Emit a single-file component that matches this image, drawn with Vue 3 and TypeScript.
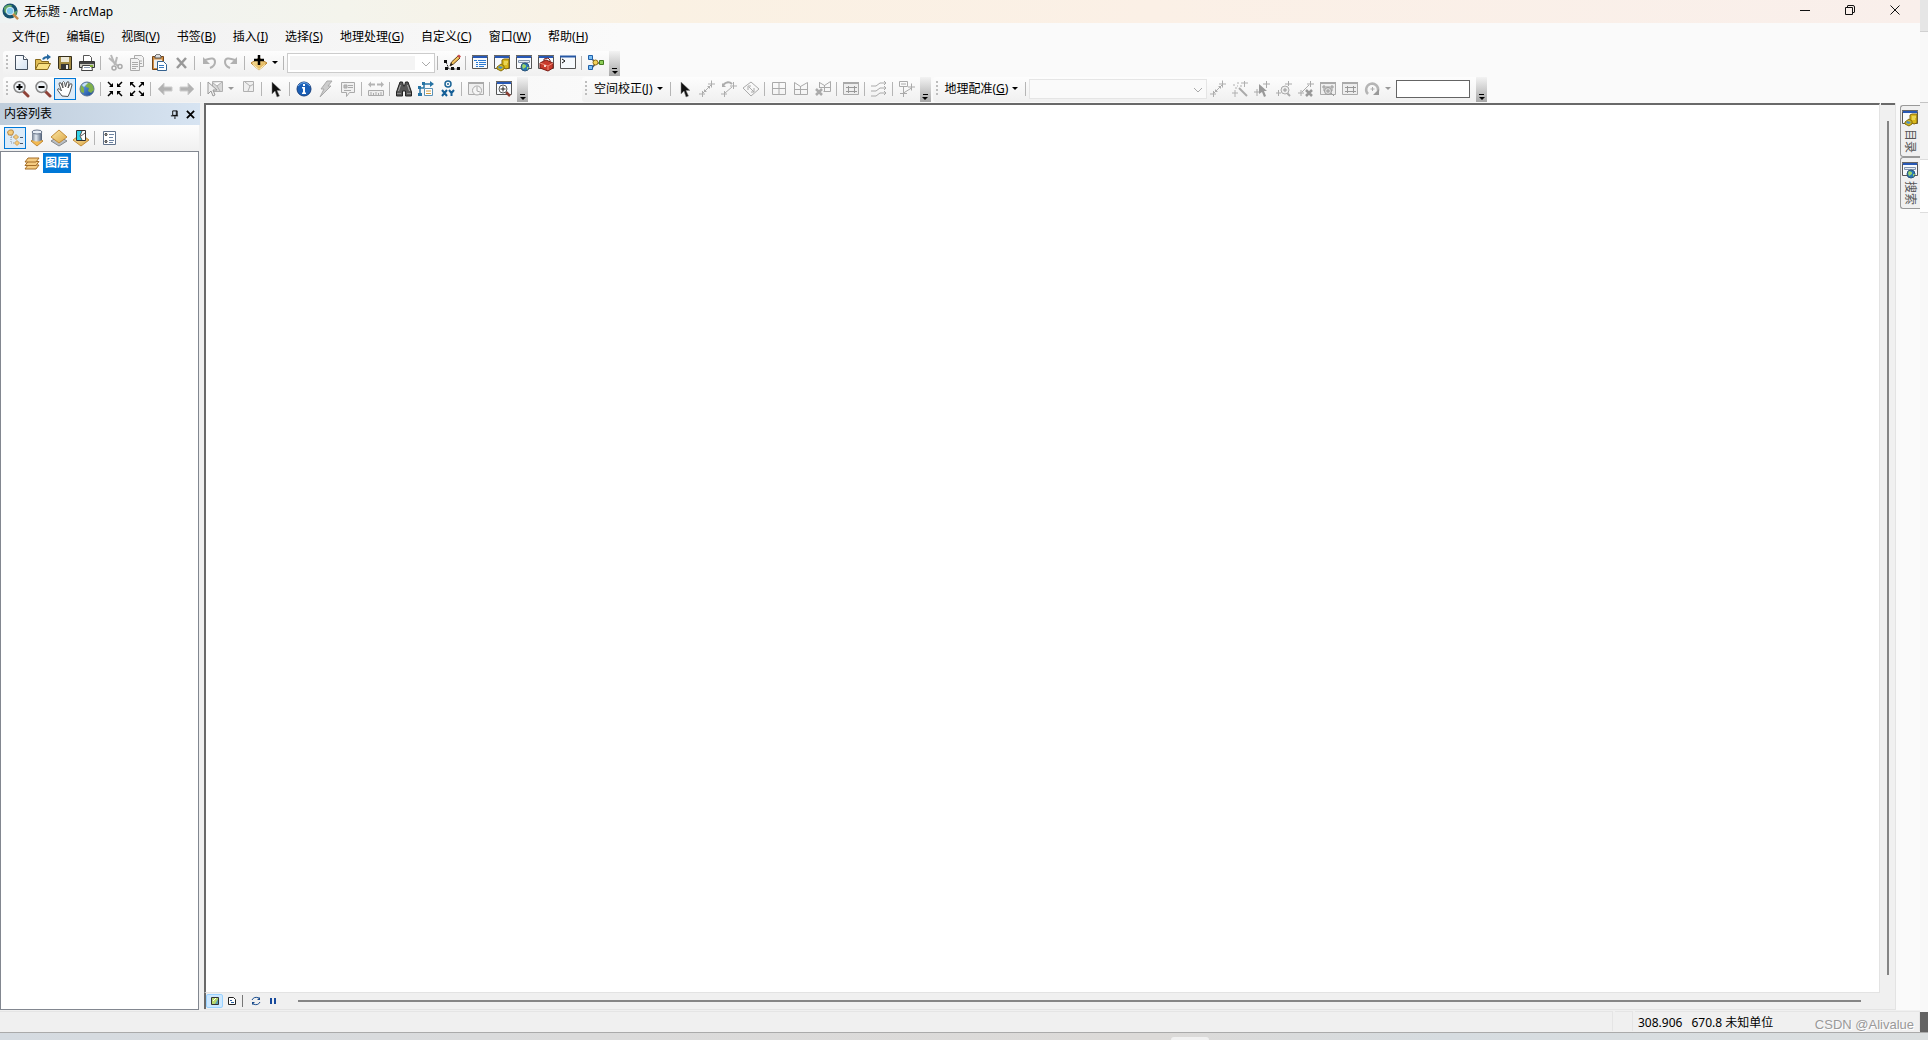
<script setup lang="ts">
import { ref } from 'vue'

interface Tool {
  kind: 'icon' | 'sep' | 'drop' | 'menu'
  icon?: string
  label?: string
  key?: string
  active?: boolean
  off?: boolean
}

const sep: Tool = { kind: 'sep' }
const drop = (label: string, off = false): Tool => ({ kind: 'drop', label, off })
const on = (icon: string, label: string, active = false): Tool => ({ kind: 'icon', icon, label, active })
const off = (icon: string, label: string): Tool => ({ kind: 'icon', icon, label, off: true })

const menus = [
  ['文件', 'F'], ['编辑', 'E'], ['视图', 'V'], ['书签', 'B'], ['插入', 'I'],
  ['选择', 'S'], ['地理处理', 'G'], ['自定义', 'C'], ['窗口', 'W'], ['帮助', 'H'],
]

const standardLeft: Tool[] = [
  on('new', '新建'), on('open', '打开'), on('save', '保存'), on('print', '打印'), sep,
  off('cut', '剪切'), off('copy', '复制'), on('paste', '粘贴'), off('delete', '删除'), sep,
  off('undo', '撤消'), off('redo', '恢复'), sep,
  on('add', '添加数据'), drop('添加数据选项'), sep,
]
const standardRight: Tool[] = [
  sep, on('editor', '编辑器'), sep,
  on('table', '内容列表'), on('catalog', '目录'), on('search', '搜索'), on('toolbox', 'ArcToolbox'), on('python', 'Python'), sep,
  on('model', '模型构建器'),
]
const navTools: Tool[] = [
  on('zoomin', '放大'), on('zoomout', '缩小'), on('hand', '平移', true), on('globe', '全图'), sep,
  on('shrink', '固定比例放大'), on('expand', '固定比例缩小'), sep,
  off('back', '后退'), off('forward', '前进'), sep,
  off('select', '选择要素'), drop('选择方式', true), off('clear', '清除选择'), sep,
  on('cursor', '选择元素'), sep,
  on('info', '识别'), off('flash', '超链接'), off('popup', 'HTML 弹出窗口'), sep,
  off('measure', '测量'), sep,
  on('find', '查找'), on('route', '查找路径'), on('xy', '转到 XY'), sep,
  off('time', '时间滑块'), sep,
  on('viewer', '查看器窗口'),
]
const adjustTools: Tool[] = [
  { kind: 'menu', label: '空间校正', key: 'J' }, sep,
  on('cursor', '选择元素'), off('link', '新建位移链接'), off('curvelink', '修改链接'), off('diamond', '多位移链接'), sep,
  off('grid', '新建标识链接'), off('edge', '边匹配'), off('edgex', '删除标识链接'), sep,
  off('linktable', '查看链接表'), sep,
  off('multi', '边捕捉'), sep,
  off('attr', '属性传递'),
]
const georefTools: Tool[] = [
  off('link', '添加控制点'), off('wand', '自动配准'), off('linksel', '选择链接'), off('linkzoom', '缩放至链接'),
  off('linkdel', '删除链接'), off('viewlink', '查看器'), off('linktable', '链接表'), off('rotate', '旋转'), drop('旋转选项', true),
]
const tocTools = [
  on('bydraw', '按绘制顺序列出', true), on('bysource', '按源列出'), on('byvis', '按可见性列出'), on('bysel', '按选择列出'), sep,
  on('options', '选项'),
]

const scale = ref('')
const layer = ref('')
const angle = ref('')
</script>

<template>
  <svg class="sprites" aria-hidden="true">
    <defs>
      <linearGradient id="gBlue" x1="0" y1="0" x2="1" y2="1"><stop offset="0" stop-color="#7db4ee" /><stop offset="1" stop-color="#0b3f94" /></linearGradient>
      <linearGradient id="gGold" x1="0" y1="0" x2="1" y2="1"><stop offset="0" stop-color="#fbe7a4" /><stop offset="1" stop-color="#dba646" /></linearGradient>
      <linearGradient id="gPage" x1="0" y1="0" x2="1" y2="1"><stop offset="0" stop-color="#fff" /><stop offset="1" stop-color="#d3e2f2" /></linearGradient>
      <linearGradient id="gCyl"><stop offset="0" stop-color="#6f7b8d" /><stop offset=".4" stop-color="#e4ebf3" /><stop offset="1" stop-color="#4c5c74" /></linearGradient>
    </defs>
    <symbol id="new" viewBox="0 0 18 18"><path d="M3.500 1.500h8l4 4v10h-12z" fill="url(#gPage)" stroke="#44505f" /><path d="M11.500 1.500v4h4" fill="#fff" stroke="#44505f" /></symbol>
    <symbol id="open" viewBox="0 0 18 18"><path d="M1.500 15.500V5.500h5l1 2h7v3" fill="#e0bd55" stroke="#86691c" /><path d="M1.500 15.500l3-6h12l-3 6z" fill="#f8df83" stroke="#86691c" /><path d="M9 5.500q1-2.500 5-2.500" fill="none" stroke="#24679f" stroke-width="2" /><path d="M13 0l4 3-4 3z" fill="#24679f" /></symbol>
    <symbol id="save" viewBox="0 0 18 18"><path d="M2.500 2.500h13v13h-12l-1-1z" fill="#a48b43" stroke="#342e1c" /><path d="M5 3h8v5H5z" fill="#ede9d8" /><path d="M5 10h8v5H5z" fill="#353535" /><path d="M10 11h2v4h-2z" fill="#eee" /></symbol>
    <symbol id="print" viewBox="0 0 18 18"><path d="M5.500 7V1.500h6l2 2V7" fill="#fff" stroke="#555" /><path d="M1.500 7.500h15v6h-15z" fill="#c8c8bf" stroke="#353535" /><path d="M2 9h14" stroke="#444" stroke-width="2" /><path d="M4.500 11.500h9l1 5h-11z" fill="#fff" stroke="#444" /><path d="M12 12h3" stroke="#7fae34" stroke-width="2" /><path d="M6 13.500h6" stroke="#8a9ab3" /></symbol>
    <symbol id="cut" viewBox="0 0 18 18"><path d="M5 1l4 10M11 3l-2 8M3 4l9 8" fill="none" stroke="#b8b8b8" stroke-width="2" /><circle cx="8" cy="14" r="2" fill="none" stroke="#aaa" stroke-width="1.500" /><circle cx="14" cy="12.500" r="2" fill="none" stroke="#aaa" stroke-width="1.500" /></symbol>
    <symbol id="copy" viewBox="0 0 18 18"><g fill="#f2f2f2" stroke="#aaa"><path d="M6.500 1.500h7l2 2v9h-9z" /><path d="M2.500 4.500h7l2 2v10h-9z" /></g><path d="M4 8.500h6M4 10.500h6M4 12.500h6M4 14.500h4M12 7h2M12 9.500h2" stroke="#aaa" /></symbol>
    <symbol id="paste" viewBox="0 0 18 18"><path d="M2.500 2.500h11v13h-11z" fill="#d28e41" stroke="#73451b" /><path d="M5 2q3-4 6 0v2H5z" fill="#ddd" stroke="#555" /><path d="M4 5.500h8V14H4z" fill="#eee" /><path d="M7.500 7.500h6l3 3v6h-9z" fill="#fff" stroke="#35628f" /><path d="M9 11.500h5M9 13.500h5" stroke="#397ac0" /></symbol>
    <symbol id="delete" viewBox="0 0 18 18"><path d="M5 4l9 10M14 4L5 14" stroke="#999" stroke-width="2.500" /></symbol>
    <symbol id="undo" viewBox="0 0 18 18"><path d="M5 6q10-4 10 2 0 4-5 6" fill="none" stroke="#b1b1b1" stroke-width="2" /><path d="M3 3v7h7z" fill="#b1b1b1" /></symbol>
    <symbol id="redo" viewBox="0 0 18 18"><path d="M13 6Q3 2 3 8q0 4 5 6" fill="none" stroke="#b1b1b1" stroke-width="2" /><path d="M15 3v7H8z" fill="#b1b1b1" /></symbol>
    <symbol id="add" viewBox="0 0 18 18"><path d="M1 9l8-5 8 5-8 7z" fill="url(#gGold)" stroke="#b98330" /><path d="M3 10.500l6 5 6-5" fill="none" stroke="#fff3bd" /><path d="M9 1v10M4 6h10" stroke="#000" stroke-width="2.500" /></symbol>
    <symbol id="editor" viewBox="0 0 18 18"><path d="M3 8l3 7h10" fill="none" stroke="#222" stroke-dasharray="2 1" /><path d="M1 6h3v3H1zM2 13h3v3H2zM8 13h3v3H8zM14 13h3v3h-3z" fill="#111" /><path d="M7 12l1.500-4L15 2l2 2-6.500 6z" fill="#f2c35e" stroke="#634318" /><path d="M14 2l2-1.500L18 2.500 16.500 4z" fill="#c94b49" /><path d="M7 12l1-3 2 1.500z" fill="#222" /></symbol>
    <symbol id="win" viewBox="0 0 18 18"><path d="M1.500 2.500h15v12h-15z" fill="#f7fafd" stroke="#555" /><path d="M1 1.500h16" stroke="#666" /><path d="M2 2h14v2H2z" fill="#2758b5" /></symbol>
    <symbol id="table" viewBox="0 0 18 18"><use href="#win" width="18" height="18" /><path d="M3 6.500h3M7 6.500h8M5 8.500h2M8 8.500h7M5 10.500h2M8 10.500h7M5 12.500h2M8 12.500h5" stroke="#2c7ad0" /></symbol>
    <symbol id="catalog" viewBox="0 0 18 18"><use href="#win" width="18" height="18" /><path d="M9 6l2-1h5v9l-3 1-4-2z" fill="#d9b81b" stroke="#85670b" /><path d="M11 8h4M11 10h3" stroke="#fbf18e" /><path d="M4 13l4-3 3 2v3l-3 2-4-2z" fill="#d6b619" stroke="#87700b" /><path d="M6 12l4 1-2 2-3-1z" fill="#4a8fc6" /></symbol>
    <symbol id="search" viewBox="0 0 18 18"><use href="#win" width="18" height="18" /><path d="M3.500 6.500h11v2h-11z" fill="#e7edf5" stroke="#8294ad" /><circle cx="10" cy="13" r="4" fill="#2879b8" stroke="#2b5479" /><path d="M8 10q4 1 3 3l-3 2-1-3zM12 13h2l-2 3z" fill="#9bd568" /></symbol>
    <symbol id="toolbox" viewBox="0 0 18 18"><use href="#win" width="18" height="18" /><path d="M3 9l6-3 7 3v5l-5 3-8-3z" fill="#c83a2d" stroke="#7c1e17" /><path d="M3 9l8 3 5-3M11 12v4" fill="none" stroke="#ef8a77" /><path d="M7 7V5l4-1 2 2v2" fill="none" stroke="#7c1e17" /><path d="M7 11h2v2H7z" fill="#f4d4cb" /></symbol>
    <symbol id="python" viewBox="0 0 18 18"><path d="M1.500 2.500h15v12h-15z" fill="#f7fafd" stroke="#555" /><path d="M1 1.500h16v2H1z" fill="#2758a5" /><path d="M3 5l3 2-3 2" fill="none" stroke="#111" /></symbol>
    <symbol id="model" viewBox="0 0 18 18"><path d="M4 4l5 5-5 6M8 9h6" fill="none" stroke="#555" stroke-width="1.500" /><path d="M1.500 1.500h4v4h-4zM1.500 11.500h4v4h-4z" fill="#7dc1f5" stroke="#1f5fa8" /><circle cx="8.500" cy="8.500" r="2.500" fill="#f4d156" stroke="#8a6c18" /><path d="M12.500 6.500h4v4h-4z" fill="#8ccd57" stroke="#437a1f" /></symbol>
    <symbol id="lens" viewBox="0 0 18 18"><path d="M11 11l5 5" stroke="#8f4238" stroke-width="3" stroke-linecap="round" /><circle cx="7.500" cy="7" r="5.500" fill="#eef2f6" stroke="#888" stroke-width="1.500" /></symbol>
    <symbol id="zoomin" viewBox="0 0 18 18"><use href="#lens" width="18" height="18" /><path d="M7.500 4v6M4.500 7h6" stroke="#000" stroke-width="2" /></symbol>
    <symbol id="zoomout" viewBox="0 0 18 18"><use href="#lens" width="18" height="18" /><path d="M4.500 7h6" stroke="#000" stroke-width="2" /></symbol>
    <symbol id="hand" viewBox="0 0 18 18"><path d="M6 16L1.500 10q0-2 2-1l2 2L3 4q0-2 2-1l2 5-.5-5.500q1-2 2 0L9.500 7l1.500-5q2-1 2 1l-1 5 2-4q2-1 2 1l-2 7-2 4.500z" fill="#fff" stroke="#555" /></symbol>
    <symbol id="globe" viewBox="0 0 18 18"><circle cx="9" cy="9" r="7" fill="url(#gBlue)" stroke="#5b7394" /><path d="M8 3q5-1 7 3l1 4-3 3-3-2 1-3-3-1-1-2zM3 5l3 3v5l-3-1q-1-3 0-7z" fill="#7fb04b" /><path d="M4 5q3-3 6-2L6 7z" fill="#c6e0f2" /></symbol>
    <symbol id="shrink" viewBox="0 0 18 18"><path d="M2 2l4 4M16 2l-4 4M2 16l4-4M16 16l-4-4" stroke="#000" stroke-width="1.500" /><path d="M7 3v4H3zM11 3v4h4zM7 15v-4H3zM11 15v-4h4z" /></symbol>
    <symbol id="expand" viewBox="0 0 18 18"><path d="M3 3l4 4M15 3l-4 4M3 15l4-4M15 15l-4-4" stroke="#000" stroke-width="1.500" /><path d="M2 2h4L2 6zM16 2h-4l4 4zM2 16h4l-4-4zM16 16h-4l4-4z" /></symbol>
    <symbol id="back" viewBox="0 0 18 18"><path d="M2 9l6-6v4h8v4H8v4z" fill="#b2b2b2" stroke="#ccc" /></symbol>
    <symbol id="forward" viewBox="0 0 18 18"><path d="M16 9l-6-6v4H2v4h8v4z" fill="#b2b2b2" stroke="#ccc" /></symbol>
    <symbol id="select" viewBox="0 0 18 18"><path d="M6.500 1.500h10v10h-10zM7 3l4 3 5-4M11 6l3 5" fill="#d8d8d8" stroke="#b0b0b0" /><path d="M2 2l9 8H7l2 5-2 1-2-5-3 3z" fill="#eee" stroke="#999" /></symbol>
    <symbol id="clear" viewBox="0 0 18 18"><path d="M4.500 1.500h10v10h-10z" fill="#efefef" stroke="#b0b0b0" /><path d="M6 2l5 4 4-2M11 6l-2 5" fill="none" stroke="#b0b0b0" /></symbol>
    <symbol id="cursor" viewBox="0 0 18 18"><path d="M5 2v12l3-3 2 6 2.500-1-2.500-5.500h4z" fill="#111" stroke="#888" stroke-width=".5" /></symbol>
    <symbol id="info" viewBox="0 0 18 18"><circle cx="9" cy="9" r="7" fill="#1b5fb6" stroke="#173f7d" /><path d="M3 6q6-7 12 0" fill="none" stroke="#6fa8e6" /><path d="M8 4h2v2H8zM7 7h3v5.500h1V14H7v-1.500h1v-4H7z" fill="#fff" /></symbol>
    <symbol id="flash" viewBox="0 0 18 18"><path d="M10 1h5l-4 5h3L3 17l4-8H4z" fill="#ccc" stroke="#aaa" /></symbol>
    <symbol id="popup" viewBox="0 0 18 18"><path d="M2.500 2.500h13v10h-5l-3 4v-4h-5z" fill="#f0f0f0" stroke="#aaa" /><path d="M5 5h3v3H5zM9 5.500h5M9 7.500h5M5 10.500h7" fill="#bbb" stroke="#aaa" /></symbol>
    <symbol id="measure" viewBox="0 0 18 18"><path d="M1 4.500l3-3v2h4v2H4v2zM17 4.500l-3-3v2h-4v2h4v2z" fill="#b4b4b4" /><path d="M1.500 10.500h15v5h-15zM4 12v3M6.500 13v2M9 12v3M11.500 13v2M14 12v3" fill="#eee" stroke="#aaa" /></symbol>
    <symbol id="find" viewBox="0 0 18 18"><path d="M5 2h2.500l1 4h1l1-4H13l3.500 10v4h-6v-5h-3v5h-6v-4z" fill="#555" stroke="#222" /><path d="M5.500 5L3.500 11M12.500 5l2 6" stroke="#aaa" /><path d="M2 13.500h4M12 13.500h4" stroke="#888" /></symbol>
    <symbol id="route" viewBox="0 0 18 18"><path d="M3 14V8h4V4h7" fill="none" stroke="#2673a4" stroke-width="1.500" /><path d="M13 1l4 3-4 3zM1 6h3v3H1zM1 13h4v3H1zM5 2h3v3H5z" fill="#2673a4" /><path d="M7.500 8.500h8v7h-8z" fill="#fff" stroke="#5b91b4" /><path d="M9 11h5M9 13.500h5" stroke="#d49b3a" /></symbol>
    <symbol id="xy" viewBox="0 0 18 18"><circle cx="9" cy="4" r="3" fill="none" stroke="#1c6597" stroke-width="1.500" /><circle cx="9" cy="4" r="1" fill="#1c6597" /><path d="M3 10l5 6M8 10l-5 6M10 10l2.500 3v3M15 10l-2.500 3" fill="none" stroke="#155f97" stroke-width="2" /></symbol>
    <symbol id="gwin" viewBox="0 0 18 18"><path d="M1.500 2.500h15v12h-15z" fill="#eee" stroke="#aaa" /><path d="M1 2h16v2H1z" fill="#aaa" /></symbol>
    <symbol id="time" viewBox="0 0 18 18"><use href="#gwin" width="18" height="18" /><circle cx="10" cy="10.500" r="4.500" fill="#f5f5f5" stroke="#aaa" /><path d="M10 7v4l3 1" fill="none" stroke="#aaa" /></symbol>
    <symbol id="viewer" viewBox="0 0 18 18"><use href="#win" width="18" height="18" /><path d="M11 12l4 4" stroke="#8b3e32" stroke-width="2.500" /><circle cx="8" cy="9" r="4" fill="#fff" stroke="#555" /><path d="M8 6.500v5M5.500 9h5" stroke="#222" /></symbol>
    <symbol id="link" viewBox="0 0 18 18"><path d="M4.500 13.500l9-9M1 14h6M4.500 11v6M10 4h7M13.500 .5v7" fill="none" stroke="#adadad" /><path d="M12 9V6H9zM6 9v3h3z" fill="#adadad" /></symbol>
    <symbol id="curvelink" viewBox="0 0 18 18"><path d="M1 14h6M4.500 11v6M10 6h7M13.500 2v7M5 13l7-6" fill="none" stroke="#adadad" /><path d="M3 5q5-5 9-1" fill="none" stroke="#adadad" stroke-width="2" /><path d="M2 3v4h4z" fill="#adadad" /></symbol>
    <symbol id="diamond" viewBox="0 0 18 18"><path d="M1 8l8-6 8 7-8 7zM6 10V6h3M7 7l5 5M12 8v4H9" fill="none" stroke="#aaa" /></symbol>
    <symbol id="grid" viewBox="0 0 18 18"><path d="M2.500 2.500h13v12h-13zM9 2v12M2 8.500h13" fill="none" stroke="#aaa" /></symbol>
    <symbol id="edge" viewBox="0 0 18 18"><path d="M2.500 2.500l6 4 7-4v12h-13zM8.500 6v8M2 9.500h13" fill="none" stroke="#aaa" /></symbol>
    <symbol id="edgex" viewBox="0 0 18 18"><path d="M5.500 2.500l5 3 6-4v10h-7M10.500 5v6M5 7.500h11M5.500 2v6" fill="none" stroke="#aaa" /><path d="M2 9l6 6M8 9l-6 6" stroke="#aaa" stroke-width="2.500" /></symbol>
    <symbol id="linktable" viewBox="0 0 18 18"><use href="#gwin" width="18" height="18" /><path d="M4 7.500h11M4 11.500h11M6.500 6v7M12.500 6v7" stroke="#999" /></symbol>
    <symbol id="multi" viewBox="0 0 18 18"><path d="M1 6h5l4-3h6M1 11h5l4-3h6M1 16h5l4-3h6M14 1l2 2-2 2M14 6l2 2-2 2M14 11l2 2-2 2" fill="none" stroke="#aaa" /></symbol>
    <symbol id="attr" viewBox="0 0 18 18"><path d="M1.500 1.500h8v5h-8zM3 4h5M5.500 7v6l8-5M2 13.500h7M5.500 10v7M10 7h7M13.500 3.500v7" fill="none" stroke="#aaa" /></symbol>
    <symbol id="wand" viewBox="0 0 18 18"><path d="M8 8l8 8" stroke="#aaa" stroke-width="2" /><path d="M1 13h6M4 10v7M2 5h2M6 3h2M4 8h2M10 3h7M13.500 1v6M9 6h2M6 6h1" stroke="#b0b0b0" /></symbol>
    <symbol id="linksel" viewBox="0 0 18 18"><path d="M1 12h6M4 9v7M10 4h7M13.500 1v7" stroke="#aaa" /><path d="M6 4v10l3-2 2 5 2-1-2-5h3z" fill="#999" /></symbol>
    <symbol id="linkzoom" viewBox="0 0 18 18"><path d="M1 13h5M3.500 10v6M10 4h7M13.500 1v5" stroke="#aaa" /><path d="M12 13l3 3" stroke="#aaa" stroke-width="2" /><circle cx="10" cy="10" r="4" fill="#eee" stroke="#aaa" /><path d="M8 10h4M10 8v4" stroke="#999" /></symbol>
    <symbol id="linkdel" viewBox="0 0 18 18"><path d="M1 13h6M4 10v6M10 4h7M13.500 1v6M5 12l7-7" stroke="#aaa" /><path d="M9 10l6 6M15 10l-6 6" stroke="#999" stroke-width="2.500" /></symbol>
    <symbol id="viewlink" viewBox="0 0 18 18"><use href="#gwin" width="18" height="18" /><path d="M3 7h12M5 5v6M13 5v6M11 12l4 4" stroke="#999" /><circle cx="9" cy="11" r="3.500" fill="#ddd" stroke="#999" /><path d="M7 11h4M9 9v4" stroke="#999" /></symbol>
    <symbol id="rotate" viewBox="0 0 18 18"><path d="M5 14A6 6 0 1 1 15 11" fill="none" stroke="#b5b5b5" stroke-width="2.500" /><path d="M10 15h6V9z" fill="#999" /><path d="M7.500 9h4M9.500 7v4" stroke="#aaa" /></symbol>
    <symbol id="bydraw" viewBox="0 0 18 18"><path d="M5 6v8h4M5 8h4" fill="none" stroke="#8c97a4" stroke-dasharray="1 1" /><path d="M1.500 3l2-2h3l1 2-1 3h-4z" fill="#f4cc7c" stroke="#b98742" /><path d="M7.500 8L10 5.500 12.500 8 10 10.500zM8.500 14l2.500-2.500 2.500 2.500-2.500 2.500z" fill="#f4cc7c" stroke="#cf9f58" /><path d="M14 8.500h3M14 14.500h3" stroke="#44546a" /></symbol>
    <symbol id="bysource" viewBox="0 0 18 18"><path d="M3 12l6 5 6-5-3-2H6z" fill="#f3b950" stroke="#c18a35" /><path d="M4 3v8q5 3 10 0V3z" fill="url(#gCyl)" /><ellipse cx="9" cy="3" rx="5" ry="2" fill="#e7edf5" stroke="#667388" /></symbol>
    <symbol id="byvis" viewBox="0 0 18 18"><path d="M1 12l8-5 8 5-8 5z" fill="#b9bec3" stroke="#85898e" /><path d="M1 8l8-7 8 7-8 6z" fill="url(#gGold)" stroke="#c38c37" /></symbol>
    <symbol id="bysel" viewBox="0 0 18 18"><path d="M1 11l8-6 8 6-8 6z" fill="url(#gGold)" stroke="#c38c37" /><path d="M4.500 1.500h9v10h-9z" fill="#fff" stroke="#333" /><path d="M5 2h5L8 7l2 4H5z" fill="#32d2e7" /><path d="M10 2L8 7l2 4M9 7l4-3" fill="none" stroke="#555" /></symbol>
    <symbol id="options" viewBox="0 0 18 18"><path d="M3.500 2.500h12v13h-12z" fill="#fff" stroke="#61738c" /><path d="M9 5.500h5M9 8.500h4M9 11.500h5M9 13.500h4" stroke="#6c83a2" /><circle cx="6" cy="5.500" r="1" fill="none" stroke="#111" /><circle cx="6" cy="12.500" r="1" fill="none" stroke="#111" /></symbol>
  </svg>

  <div class="desktop">
    <div class="screen">
      <div class="app">
        <header class="titlebar">
          <svg class="logo" viewBox="0 0 18 18" aria-hidden="true">
            <circle cx="8.500" cy="8.500" r="8" fill="#17516e" /><path d="M2 5q4-5 9-2l-3 3-2 5-3-1zM12 10l4-2-1 5-3 2z" fill="#65aa67" />
            <path d="M11 11l6 6" stroke="#c58a4b" stroke-width="2.500" /><circle cx="8.500" cy="8.500" r="4" fill="#7cc6ec" stroke="#dff0f7" />
          </svg>
          <h1>无标题 - ArcMap</h1>
          <button class="caption" aria-label="最小化"><svg viewBox="0 0 12 12"><path d="M1 6.500h10" /></svg></button>
          <button class="caption" aria-label="还原"><svg viewBox="0 0 12 12"><path d="M1.500 3.500h7v7h-7zM3.500 3V2q0-.5.5-.5h5q1.500 0 1.500 1.500v5q0 .5-.5.500H9" /></svg></button>
          <button class="caption" aria-label="关闭"><svg viewBox="0 0 12 12"><path d="M1.500 1.500l9 9M10.500 1.500l-9 9" /></svg></button>
        </header>

        <nav class="menubar">
          <button v-for="m in menus" :key="m[0]">{{ m[0] }}(<u>{{ m[1] }}</u>)</button>
        </nav>

        <div class="row">
          <div class="toolbar" role="toolbar" aria-label="标准工具">
            <span class="grip"></span>
            <template v-for="(t, i) in standardLeft" :key="i">
              <span v-if="t.kind === 'sep'" class="sep"></span>
              <button v-else-if="t.kind === 'drop'" class="drop" :aria-label="t.label"></button>
              <button v-else class="tool" :disabled="t.off" :aria-label="t.label"><svg><use :href="'#' + t.icon" /></svg></button>
            </template>
            <span class="combo scale"><select v-model="scale" aria-label="地图比例" disabled></select><svg viewBox="0 0 10 10"><path d="M1 3l4 4 4-4" /></svg></span>
            <template v-for="(t, i) in standardRight" :key="i">
              <span v-if="t.kind === 'sep'" class="sep"></span>
              <button v-else class="tool" :aria-label="t.label"><svg><use :href="'#' + t.icon" /></svg></button>
            </template>
            <button class="more" aria-label="更多标准工具"></button>
          </div>
        </div>

        <div class="row">
          <div class="toolbar" role="toolbar" aria-label="工具">
            <span class="grip"></span>
            <template v-for="(t, i) in navTools" :key="i">
              <span v-if="t.kind === 'sep'" class="sep"></span>
              <button v-else-if="t.kind === 'drop'" class="drop" :disabled="t.off" :aria-label="t.label"></button>
              <button v-else class="tool" :class="{ active: t.active }" :disabled="t.off" :aria-label="t.label"><svg><use :href="'#' + t.icon" /></svg></button>
            </template>
            <button class="more" aria-label="更多工具"></button>
          </div>
          <div class="toolbar adjust" role="toolbar" aria-label="空间校正">
            <span class="grip"></span>
            <template v-for="(t, i) in adjustTools" :key="i">
              <span v-if="t.kind === 'sep'" class="sep"></span>
              <button v-else-if="t.kind === 'menu'" class="textmenu"><span>{{ t.label }}(<u>{{ t.key }}</u>)</span></button>
              <button v-else class="tool" :disabled="t.off" :aria-label="t.label"><svg><use :href="'#' + t.icon" /></svg></button>
            </template>
            <button class="more" aria-label="更多空间校正工具"></button>
          </div>
          <div class="toolbar georef" role="toolbar" aria-label="地理配准">
            <span class="grip"></span>
            <button class="textmenu"><span>地理配准(<u>G</u>)</span></button>
            <span class="sep"></span>
            <span class="combo layer"><select v-model="layer" aria-label="配准图层" disabled></select><svg viewBox="0 0 10 10"><path d="M1 3l4 4 4-4" /></svg></span>
            <template v-for="(t, i) in georefTools" :key="i">
              <button v-if="t.kind === 'drop'" class="drop" disabled :aria-label="t.label"></button>
              <button v-else class="tool" disabled :aria-label="t.label"><svg><use :href="'#' + t.icon" /></svg></button>
            </template>
            <input v-model="angle" class="angle" aria-label="旋转角度" />
            <button class="more" aria-label="更多地理配准工具"></button>
          </div>
        </div>

        <main class="work">
          <aside class="toc">
            <div class="toc-head">
              <h2>内容列表</h2>
              <button aria-label="自动隐藏"><svg viewBox="0 0 10 10"><path d="M3 1h5v5H3zM1 6.500h8M5.500 7v3M7 1v5" /></svg></button>
              <button aria-label="关闭"><svg viewBox="0 0 10 10"><path class="heavy" d="M1 1l8 8M9 1L1 9" /></svg></button>
            </div>
            <div class="toc-tools">
              <template v-for="(t, i) in tocTools" :key="i">
                <span v-if="t.kind === 'sep'" class="sep"></span>
                <button v-else class="tool" :class="{ active: t.active }" :aria-label="t.label"><svg><use :href="'#' + t.icon" /></svg></button>
              </template>
            </div>
            <ul class="tree">
              <li>
                <svg viewBox="0 0 18 16" aria-hidden="true"><g fill="#f6cd83" stroke="#a46d27"><path d="M2 14l3-4h11l-3 4z" /><path d="M2 10.500l3-4h11l-3 4z" /><path d="M2 7l3-4h11l-3 4z" /></g></svg>
                <span>图层</span>
              </li>
            </ul>
          </aside>

          <section class="map">
            <div class="map-body">
              <div class="canvas"></div>
              <div class="vscroll"><i></i></div>
            </div>
            <div class="map-foot">
              <button class="view active" aria-label="数据视图"><svg viewBox="0 0 10 10"><path d="M1.500 1.500h7v7h-7z" fill="#b9d86c" stroke="#333" /><path d="M5 8l3-5v5z" fill="#5b9fb0" /><path d="M3 5l3-3" stroke="#fff" /></svg></button>
              <button class="view" aria-label="布局视图"><svg viewBox="0 0 10 10"><path d="M1.500 1.500h5l2 2v5h-7z" fill="#fff" stroke="#222" /><path d="M3 4.500h2M4 6.500h3" fill="none" stroke="#2c62a0" /></svg></button>
              <span class="foot-sep"></span>
              <button class="view" aria-label="刷新"><svg viewBox="0 0 10 10"><path d="M1 4q2-4 7-2M9 6q-2 4-7 2" fill="none" stroke="#174a8c" /><path d="M9 1v3H6zM1 9V6h3z" fill="#174a8c" /></svg></button>
              <button class="view" aria-label="暂停绘制"><svg viewBox="0 0 10 10"><path d="M2 2h2v6H2zM6 2h2v6H6z" fill="#174a9c" /></svg></button>
              <div class="hscroll"><i></i></div>
            </div>
          </section>

          <div class="dock">
            <button><svg viewBox="0 0 18 18"><use href="#catalog" /></svg><span>目录</span></button>
            <button><svg viewBox="0 0 18 18"><use href="#search" /></svg><span>搜索</span></button>
          </div>
        </main>

        <footer class="status">
          <span class="cell"></span>
          <span class="cell narrow"></span>
          <span class="cell coords"><span>308.906</span><span>670.8 未知单位</span></span>
        </footer>
      </div>
      <div class="behind"><i class="b1"></i><i class="b2"></i><i class="b3"></i><i class="b4"></i><i class="b5"></i><i class="b6"></i></div>
      <p class="watermark">CSDN @Alivalue</p>
    </div>
    <div class="taskbar"><i></i></div>
  </div>
</template>

<style>
body {
  margin: 0;
}
</style>

<style scoped>
* {
  box-sizing: border-box;
}
.sprites {
  position: absolute;
  width: 0;
  height: 0;
}
.desktop {
  display: flex;
  flex-direction: column;
  min-height: 100vh;
  overflow: hidden;
  font: 12px/16px "Noto Sans", "Noto Sans CJK SC", sans-serif;
  color: #000;
  background: #f0f0f0;
}
.screen {
  position: relative;
  display: flex;
  flex: 1;
}
.app {
  display: flex;
  flex: 1;
  flex-direction: column;
  min-width: 0;
  background: linear-gradient(90deg, #f0f0f0, #fafafa 620px);
}
button {
  display: flex;
  align-items: center;
  justify-content: center;
  padding: 0;
  border: 0;
  background: none;
  color: inherit;
  font: inherit;
  white-space: nowrap;
}
h1,
h2 {
  margin: 0;
  font-size: 12px;
  font-weight: 400;
}
i {
  display: block;
}
.titlebar {
  display: flex;
  align-items: center;
  height: 23px;
  padding: 0 3px 0 2px;
  background: linear-gradient(90deg, #eff3f3, #f4f4ec 18%, #faf1e3 34%, #fbf0e6 60%, #f9efeb);
}
.logo {
  width: 17px;
  height: 17px;
  margin-right: 5px;
}
.titlebar h1 {
  flex: 1;
}
.caption {
  width: 45px;
  height: 20px;
  margin-bottom: 3px;
}
.caption svg {
  width: 12px;
  height: 12px;
  fill: none;
  stroke: #111;
}
.menubar {
  display: flex;
  height: 28px;
  padding: 0 3px;
}
.menubar button {
  padding: 0 8px 0 9px;
  height: 28px;
}
.row {
  display: flex;
  height: 26px;
  padding-left: 3px;
}
.toolbar {
  display: flex;
  flex: none;
  align-items: center;
  height: 25px;
  padding-bottom: 2px;
  background: linear-gradient(#fdfdfd, #f0f0f0);
  border-radius: 3px 0 0 3px;
}
.adjust {
  margin-left: 54px;
}
.georef {
  margin-left: 2px;
}
.grip {
  width: 2px;
  height: 16px;
  margin: 0 2px 0 3px;
  background: repeating-linear-gradient(#bdbdbd 0 2px, transparent 2px 4px);
}
.tool {
  width: 22px;
  height: 22px;
}
.tool svg {
  flex: none;
  width: 18px;
  height: 18px;
}
.tool.active {
  border: 1px solid #0078d7;
  background: #dcebf8;
}
.sep {
  width: 1px;
  height: 14px;
  margin: 0 3px 0 2px;
  background: #b5b5b5;
}
.drop {
  width: 11px;
  height: 22px;
  padding-right: 2px;
}
.drop::before,
.textmenu::after {
  content: "";
  border: 3px solid transparent;
  border-top-color: #000;
  border-bottom: 0;
}
.drop:disabled::before {
  border-top-color: #999;
}
.textmenu {
  gap: 4px;
  height: 22px;
  padding: 0 5px;
}
.combo {
  position: relative;
  height: 20px;
  border: 1px solid #ccc;
  background: #fff;
}
.combo select {
  display: block;
  height: 14px;
  margin: 2px;
  border: 0;
  appearance: none;
  background: #f0f0f0;
}
.combo svg {
  position: absolute;
  top: 5px;
  right: 3px;
  width: 10px;
  height: 10px;
  fill: none;
  stroke: #aaa;
}
.scale {
  width: 148px;
}
.scale select {
  width: 125px;
}
.layer {
  width: 178px;
  border-color: #e5e5e5;
  background: #fafafa;
}
.layer select {
  width: 155px;
  background: #fafafa;
}
.angle {
  width: 74px;
  height: 18px;
  margin: 0 6px 0 2px;
  padding: 0 3px;
  border: 1px solid #646464;
  border-radius: 0;
  background: #fff;
}
.more {
  flex-direction: column;
  align-self: flex-start;
  justify-content: flex-end;
  gap: 2px;
  width: 11px;
  height: 25px;
  margin-left: 2px;
  padding-bottom: 2px;
  background: linear-gradient(#f3f3f3, #a8a8a8);
}
.angle + .more {
  margin-left: 0;
}
.more::before {
  content: "";
  width: 5px;
  height: 1px;
  background: #000;
}
.more::after {
  content: "";
  border: 3px solid transparent;
  border-top-color: #000;
  border-bottom: 0;
}
.work {
  display: flex;
  flex: 1;
  background: #f0f0f0;
}
.toc {
  display: flex;
  flex: none;
  flex-direction: column;
  width: 200px;
  padding-right: 1px;
}
.toc-head {
  display: flex;
  align-items: center;
  height: 22px;
  margin-right: -1px;
  padding: 0 2px 0 4px;
  background: linear-gradient(90deg, #bfcddb, #d7e4f2);
}
.toc-head h2 {
  flex: 1;
}
.toc-head button {
  width: 16px;
  height: 18px;
}
.toc-head svg {
  width: 9px;
  height: 9px;
  fill: none;
  stroke: #000;
}
.heavy {
  stroke-width: 2;
}
.toc-tools {
  display: flex;
  align-items: center;
  height: 26px;
  padding-left: 4px;
  background: linear-gradient(#fdfdfd, #f0f0f0);
}
.tree {
  flex: 1;
  margin: 0;
  padding: 1px 0 0 22px;
  border: 1px solid #828790;
  background: #fff;
  list-style: none;
}
.tree li {
  display: flex;
  align-items: center;
  gap: 2px;
}
.tree svg {
  width: 18px;
  height: 16px;
}
.tree span {
  padding: 1px 2px;
  background: #0078d7;
  color: #fff;
  font-weight: 700;
  line-height: 18px;
}
.map {
  display: flex;
  flex: 1;
  flex-direction: column;
  min-width: 0;
  margin-left: 4px;
  border: solid #e3e3e3;
  border-width: 0 1px 1px 0;
}
.map-body {
  display: flex;
  flex: 1;
}
.canvas {
  flex: 1;
  border: solid;
  border-width: 2px 1px 1px 2px;
  border-color: #696969 #e3e3e3 #e3e3e3 #696969;
  background: #fff;
}
.vscroll {
  width: 14px;
  margin-left: 1px;
  padding: 16px 0 18px;
  border-top: 2px solid #696969;
}
.vscroll i {
  width: 2px;
  height: 100%;
  margin-left: 6px;
  background: #858585;
}
.map-foot {
  display: flex;
  align-items: center;
  height: 16px;
  border-left: 2px solid #696969;
}
.view {
  width: 17px;
  height: 14px;
}
.view svg {
  width: 10px;
  height: 10px;
}
.view.active {
  border: 1px solid #99d1ff;
  border-radius: 2px;
  background: #cce8ff;
}
.foot-sep {
  width: 1px;
  height: 12px;
  margin: 0 4px 0 2px;
  background: #777;
}
.hscroll {
  flex: 1;
  padding: 0 34px 0 17px;
}
.hscroll i {
  height: 2px;
  background: #858585;
}
.dock {
  width: 24px;
  padding: 2px 0 0 4px;
  background: #fafafa;
}
.dock button {
  flex-direction: column;
  gap: 2px;
  width: 20px;
  height: 52px;
  padding-right: 1px;
  border: 1px solid #999;
  border-right: 0;
  border-radius: 3px 0 0 3px;
  background: #f0f0f0;
  color: #555;
}
.dock svg {
  width: 18px;
  height: 18px;
}
.dock span {
  padding-right: 1px;
  writing-mode: vertical-rl;
  text-orientation: sideways;
}
.status {
  display: flex;
  gap: 2px;
  height: 22px;
  background: #f0f0f0;
}
.cell {
  flex: 1;
  height: 20px;
  margin-top: 1px;
  border: solid #e5e5e5;
  border-width: 1px 1px 0 0;
}
.narrow {
  flex: none;
  width: 18px;
}
.coords {
  display: flex;
  flex: none;
  gap: 9px;
  width: 285px;
  padding-left: 3px;
  line-height: 21px;
}
.behind {
  display: flex;
  flex: none;
  flex-direction: column;
  width: 8px;
}
.b1 {
  height: 32px;
  border-bottom: 1px solid #d0d0d0;
  background: #e6e6e6;
}
.b2 {
  height: 71px;
  border-bottom: 1px solid #c4c4c4;
  background: #f8f8f8;
}
.b3 {
  height: 57px;
  border-bottom: 1px solid #ddd;
  background: #f3f3f3;
}
.b4 {
  height: 53px;
  border-bottom: 1px solid #ddd;
  background: #fff;
}
.b5 {
  flex: 1;
  background: #f8f8f8;
}
.b6 {
  height: 20px;
  background: #646464;
}
.watermark {
  position: absolute;
  right: 14px;
  bottom: 0;
  margin: 0;
  color: #999;
  font: 13px/14px "Liberation Sans", sans-serif;
  text-shadow: 1px 1px #fff;
}
.taskbar {
  height: 8px;
  border-top: 1px solid #aaa;
  background: linear-gradient(90deg, #d5dbe1, #dbdbdb 30%, #dcdad8 60%, #d6dce0 75%, #dbdfe0);
}
.taskbar i {
  width: 38px;
  height: 3px;
  margin: 4px auto 0 calc(61% - 5px);
  border-radius: 3px 3px 0 0;
  background: #f1f1f1;
}
</style>
